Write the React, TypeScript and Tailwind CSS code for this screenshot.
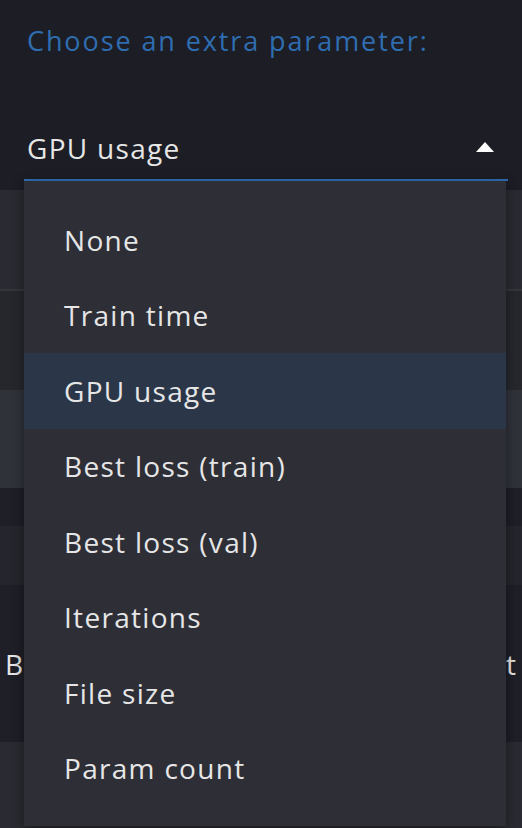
const options = [
  "None",
  "Train time",
  "GPU usage",
  "Best loss (train)",
  "Best loss (val)",
  "Iterations",
  "File size",
  "Param count",
];

const selected = "GPU usage";

export default function App() {
  return (
    <div
      className="relative h-[828px] w-[522px] overflow-hidden bg-[#1c1d25] text-[#e6e6e6]"
      style={{ fontFamily: '"Open Sans", "Noto Sans", sans-serif' }}
    >
      {/* header + select */}
      <div className="px-[27px] pt-[21px]">
        <div className="text-[27px] leading-[40px] tracking-[1.9px] text-[#2f6db1]">
          Choose an extra parameter:
        </div>
      </div>
      <div className="mt-[65px] flex h-[44px] items-center justify-between pl-[27px] pr-[28px]">
        <span className="text-[28px] tracking-[1.3px]">GPU usage</span>
        <svg width="18" height="10" viewBox="0 0 18 10" className="mt-[-2px]">
          <polygon points="9,0 18,10 0,10" fill="#ffffff" />
        </svg>
      </div>
      <div className="h-[20px]" />

      {/* page content behind the menu */}
      <div className="flex flex-col">
        <div className="h-[99px] bg-[#2a2b32]" />
        <div className="h-[2px] bg-[#35363d]" />
        <div className="h-[99px] bg-[#26272d]" />
        <div className="h-[98px] bg-[#30323a]" />
        <div className="h-[38px] bg-[#1e1f27]" />
        <div className="h-[59px] bg-[#25262d]" />
        <div className="flex h-[157px] items-center justify-between bg-[#1e1f27] pl-[5px] pr-[6px] text-[28px]">
          <span>Be</span>
          <span>Last</span>
        </div>
        <div className="h-[90px] bg-[#2a2b32]" />
      </div>

      {/* open dropdown */}
      <div className="absolute left-[24px] top-[179px] w-[484px] border-t-2 border-[#2f6db1]">
        <div className="mr-[2px] bg-[#2d2e36] pt-[21px] pb-[20px] shadow-[0_4px_12px_rgba(0,0,0,0.4)]">
          {options.map((o) => (
            <div
              key={o}
              className={`flex h-[75.5px] items-center pl-[40px] text-[28px] tracking-[1.3px] ${
                o === selected ? "bg-[#2b3748]" : ""
              }`}
            >
              {o}
            </div>
          ))}
        </div>
      </div>
    </div>
  );
}
